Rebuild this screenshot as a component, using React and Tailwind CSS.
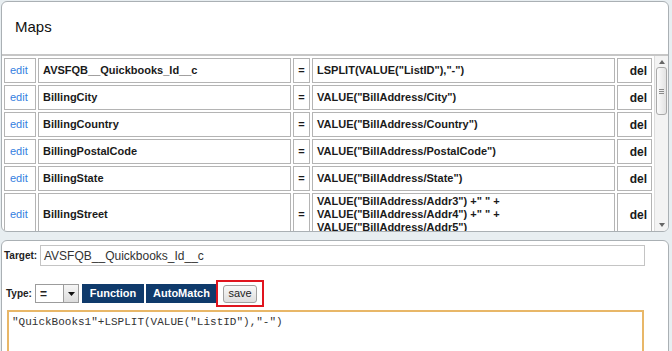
import React from "react";

const rows = [
  { f: "AVSFQB__Quickbooks_Id__c", v: ['LSPLIT(VALUE("ListID"),"-")'] },
  { f: "BillingCity", v: ['VALUE("BillAddress/City")'] },
  { f: "BillingCountry", v: ['VALUE("BillAddress/Country")'] },
  { f: "BillingPostalCode", v: ['VALUE("BillAddress/PostalCode")'] },
  { f: "BillingState", v: ['VALUE("BillAddress/State")'] },
  {
    f: "BillingStreet",
    v: [
      'VALUE("BillAddress/Addr3") +" " +',
      'VALUE("BillAddress/Addr4") +" " +',
      'VALUE("BillAddress/Addr5")',
    ],
  },
];

const cell = "border border-[#b4b4b4] align-middle";

export default function App() {
  return (
    <div
      className="w-[672px] h-[351px] overflow-hidden bg-[#e8eef1] pt-px pl-px"
      style={{ fontFamily: '"Liberation Sans", Arial, sans-serif' }}
    >
      {/* Top panel */}
      <div className="w-[668px] h-[231px] bg-white border border-[#aab0b4] rounded-[6px] flex flex-col overflow-hidden">
        <div className="h-[52px] flex items-center pl-[13px] text-[15px] text-[#111] pb-[1px]">Maps</div>
        <div className="h-[2px] bg-[#c6c6c6]" />
        <div className="flex flex-1 min-h-0">
          <div className="w-[652px] overflow-hidden">
            <table className="border-separate border-spacing-[2px] w-[652px] text-[11px] text-[#1a1a1a]">
              <tbody>
                {rows.map((r, i) => (
                  <tr key={i}>
                    <td className={`${cell} w-[32px] h-[25px] pl-[5px] text-[#3380e0]`}>edit</td>
                    <td className={`${cell} w-[253px] pl-[4px] font-bold`}>{r.f}</td>
                    <td className={`${cell} w-[17px] text-center font-bold`}>=</td>
                    <td className={`${cell} w-[303px] pl-[4px] font-bold leading-[13px] py-[1px]`}>
                      {r.v.map((l, j) => (
                        <div key={j}>{l}</div>
                      ))}
                    </td>
                    <td className={`${cell} text-right pr-[4px] font-bold text-[12px]`}>del</td>
                  </tr>
                ))}
              </tbody>
            </table>
          </div>
          {/* scrollbar */}
          <div className="w-[14px] bg-[#f3f3f3] border-l border-[#dcdcdc] flex flex-col items-center">
            <div className="h-[11px] flex items-center justify-center">
              <svg width="6" height="4" viewBox="0 0 6 4"><path d="M0 4 L3 0 L6 4 Z" fill="#666" /></svg>
            </div>
            <div className="w-[11px] h-[48px] bg-gradient-to-r from-[#fbfbfb] to-[#e3e3e3] border border-[#a9a9a9] rounded-[3px] flex flex-col items-center justify-center gap-[1px]">
              <div className="w-[5px] h-px bg-[#8a8a8a]" />
              <div className="w-[5px] h-px bg-[#8a8a8a]" />
              <div className="w-[5px] h-px bg-[#8a8a8a]" />
            </div>
            <div className="flex-1" />
            <div className="h-[13px] flex items-center justify-center">
              <svg width="6" height="4" viewBox="0 0 6 4"><path d="M0 0 L3 4 L6 0 Z" fill="#666" /></svg>
            </div>
          </div>
        </div>
      </div>

      {/* Bottom panel */}
      <div className="mt-[8px] w-[668px] h-[130px] bg-white border border-[#aab0b4] rounded-[6px] pt-[4px]">
        <div className="flex items-center h-[21px]">
          <span className="text-[10px] font-bold text-[#222] pl-[2px] w-[38px]">Target:</span>
          <div className="w-[605px] h-[21px] border border-[#c4c4c4] flex items-center pl-[3px] text-[12px] text-[#333]">
            AVSFQB__Quickbooks_Id__c
          </div>
        </div>
        <div className="flex items-center mt-[14px] h-[27px]">
          <span className="text-[10px] font-bold text-[#222] pl-[4px] w-[33px]">Type:</span>
          <div className="w-[44px] h-[19px] border border-[#9c9c9c] flex items-center bg-white">
            <span className="flex-1 pl-[4px] text-[12px] text-[#222] font-bold leading-none">=</span>
            <div className="w-[15px] h-[17px] border-l border-[#9c9c9c] bg-gradient-to-b from-[#f6f6f6] to-[#dcdcdc] flex items-center justify-center">
              <svg width="7" height="4" viewBox="0 0 7 4"><path d="M0 0 L3.5 4 L7 0 Z" fill="#111" /></svg>
            </div>
          </div>
          <div className="ml-[3px] w-[62px] h-[19px] bg-[#0f3a6b] text-white text-[11px] font-bold flex items-center justify-center">Function</div>
          <div className="ml-[2px] w-[71px] h-[19px] bg-[#0f3a6b] text-white text-[11px] font-bold flex items-center justify-center">AutoMatch</div>
          <div className="ml-[-1px] w-[48px] h-[27px] border-2 border-[#e0141e] flex items-center justify-center">
            <div className="w-[34px] h-[18px] border border-[#a0a0a0] rounded-[3px] bg-gradient-to-b from-[#f8f8f8] to-[#dedede] text-[11px] text-[#222] flex items-center justify-center">save</div>
          </div>
        </div>
        <div className="ml-[5px] mt-[3px] w-[637px] h-[60px] border-2 border-[#e8b768] px-[3px] pt-[3px]">
          <div
            className="text-[11px] text-[#333] leading-[14px]"
            style={{ fontFamily: '"Liberation Mono", "Courier New", monospace' }}
          >
            "QuickBooks1"+LSPLIT(VALUE("ListID"),"-")
          </div>
        </div>
      </div>
    </div>
  );
}
